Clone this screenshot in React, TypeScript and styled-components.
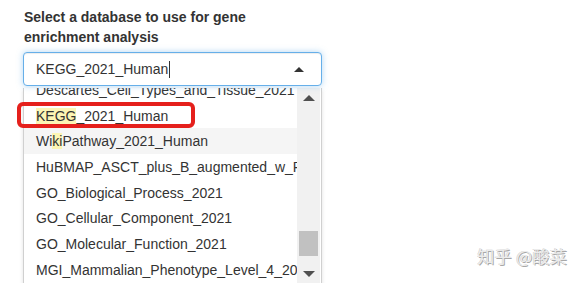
import React from 'react';
import styled, { createGlobalStyle } from 'styled-components';

const GlobalStyle = createGlobalStyle`
  html, body {
    margin: 0;
    padding: 0;
    background: #fff;
  }
  body {
    font-family: "Liberation Sans", Arial, sans-serif;
    color: #333;
  }
`;

const options: { label: string; mark?: [number, number] }[] = [
  { label: 'Descartes_Cell_Types_and_Tissue_2021' },
  { label: 'KEGG_2021_Human', mark: [0, 4] },
  { label: 'WikiPathway_2021_Human', mark: [2, 4] },
  { label: 'HuBMAP_ASCT_plus_B_augmented_w_RNAseq_Coexpression' },
  { label: 'GO_Biological_Process_2021' },
  { label: 'GO_Cellular_Component_2021' },
  { label: 'GO_Molecular_Function_2021' },
  { label: 'MGI_Mammalian_Phenotype_Level_4_2021' },
  { label: 'Human_Phenotype_Ontology' }
];

const activeIndex = 2;

function Label(props: { text: string; mark?: [number, number] }) {
  if (!props.mark) return <>{props.text}</>;
  const [a, b] = props.mark;
  return (
    <>
      {props.text.slice(0, a)}
      <Mark>{props.text.slice(a, b)}</Mark>
      {props.text.slice(b)}
    </>
  );
}

export default function App() {
  return (
    <Page>
      <GlobalStyle />
      <Field>
        <Title>
          Select a database to use for gene
          <br />
          enrichment analysis
        </Title>
        <Control>
          <span>KEGG_2021_Human</span>
          <Caret />
          <Arrow $up />
        </Control>
        <Dropdown>
          <Options>
            {options.map((o, i) => (
              <Option key={o.label} $active={i === activeIndex}>
                <Label text={o.label} mark={o.mark} />
              </Option>
            ))}
          </Options>
          <ScrollBar>
            <ScrollArrow $up />
            <Track>
              <Thumb />
            </Track>
            <ScrollArrow />
          </ScrollBar>
          <Callout />
        </Dropdown>
      </Field>
      <Watermark>知乎 @酸菜</Watermark>
    </Page>
  );
}

const Page = styled.div`
  position: relative;
  width: 582px;
  height: 283px;
  overflow: hidden;
  padding: 7px 0 0 23px;
  box-sizing: border-box;
`;

const Field = styled.div`
  width: 299px;
  display: flex;
  flex-direction: column;
`;

const Title = styled.div`
  font-size: 14px;
  font-weight: bold;
  line-height: 20px;
  padding-left: 1px;
  margin-bottom: 5px;
`;

const Control = styled.div`
  position: relative;
  height: 34px;
  display: flex;
  align-items: center;
  padding: 0 12px;
  box-sizing: border-box;
  border: 1px solid #66afe9;
  border-radius: 4px;
  box-shadow: inset 0 1px 1px rgba(0, 0, 0, 0.075), 0 0 6px rgba(102, 175, 233, 0.5);
  font-size: 14px;
  background: #fff;
  z-index: 2;
`;

const Caret = styled.span`
  width: 1px;
  height: 17px;
  background: #333;
  margin-left: 1px;
`;

const Arrow = styled.span<{ $up?: boolean }>`
  margin-left: auto;
  margin-right: 5px;
  width: 0;
  height: 0;
  border-left: 5px solid transparent;
  border-right: 5px solid transparent;
  ${p => (p.$up ? 'border-bottom: 5px solid #333;' : 'border-top: 5px solid #333;')}
`;

const Dropdown = styled.div`
  position: relative;
  height: 198px;
  margin-top: 2px;
  display: flex;
  border: 1px solid #d0d0d0;
  border-top: none;
  box-shadow: 0 2px 4px rgba(0, 0, 0, 0.12);
  background: #fff;
`;

const Options = styled.div`
  flex: 1;
  min-width: 0;
  overflow: hidden;
  & > div:first-child {
    margin-top: -11px;
  }
`;

const Option = styled.div<{ $active?: boolean }>`
  height: 25.7px;
  display: flex;
  align-items: center;
  padding-left: 12px;
  font-size: 14px;
  white-space: nowrap;
  overflow: hidden;
  color: #333;
  background: ${p => (p.$active ? '#f5f5f5' : '#fff')};
`;

const Mark = styled.span`
  background: #fcf5b4;
`;

const ScrollBar = styled.div`
  width: 23px;
  flex: none;
  display: flex;
  flex-direction: column;
  background: #f1f1f1;
  margin-right: 1px;
`;

const ScrollArrow = styled.div<{ $up?: boolean }>`
  height: 20px;
  display: flex;
  align-items: center;
  justify-content: center;
  &::after {
    content: '';
    width: 0;
    height: 0;
    border-left: 6px solid transparent;
    border-right: 6px solid transparent;
    ${p => (p.$up ? 'border-bottom: 6px solid #505050;' : 'border-top: 6px solid #505050;')}
  }
`;

const Track = styled.div`
  height: 156px;
  display: flex;
  flex-direction: column;
  justify-content: flex-end;
  padding: 0 2px;
`;

const Thumb = styled.div`
  height: 25px;
  background: #c1c1c1;
  margin-bottom: 8px;
`;

const Callout = styled.div`
  position: absolute;
  left: -7px;
  top: 14px;
  width: 178px;
  height: 26px;
  border: 4px solid #e5201c;
  border-radius: 6px;
  box-sizing: border-box;
`;

const Watermark = styled.div`
  position: absolute;
  right: 15px;
  bottom: 15px;
  font-family: "Noto Sans CJK SC", "Liberation Sans", sans-serif;
  font-size: 17px;
  color: #ececec;
  letter-spacing: 0.3px;
  text-shadow: 1px 1px 0 #a8a8a8, -0.5px -0.5px 0 #d0d0d0;
`;
